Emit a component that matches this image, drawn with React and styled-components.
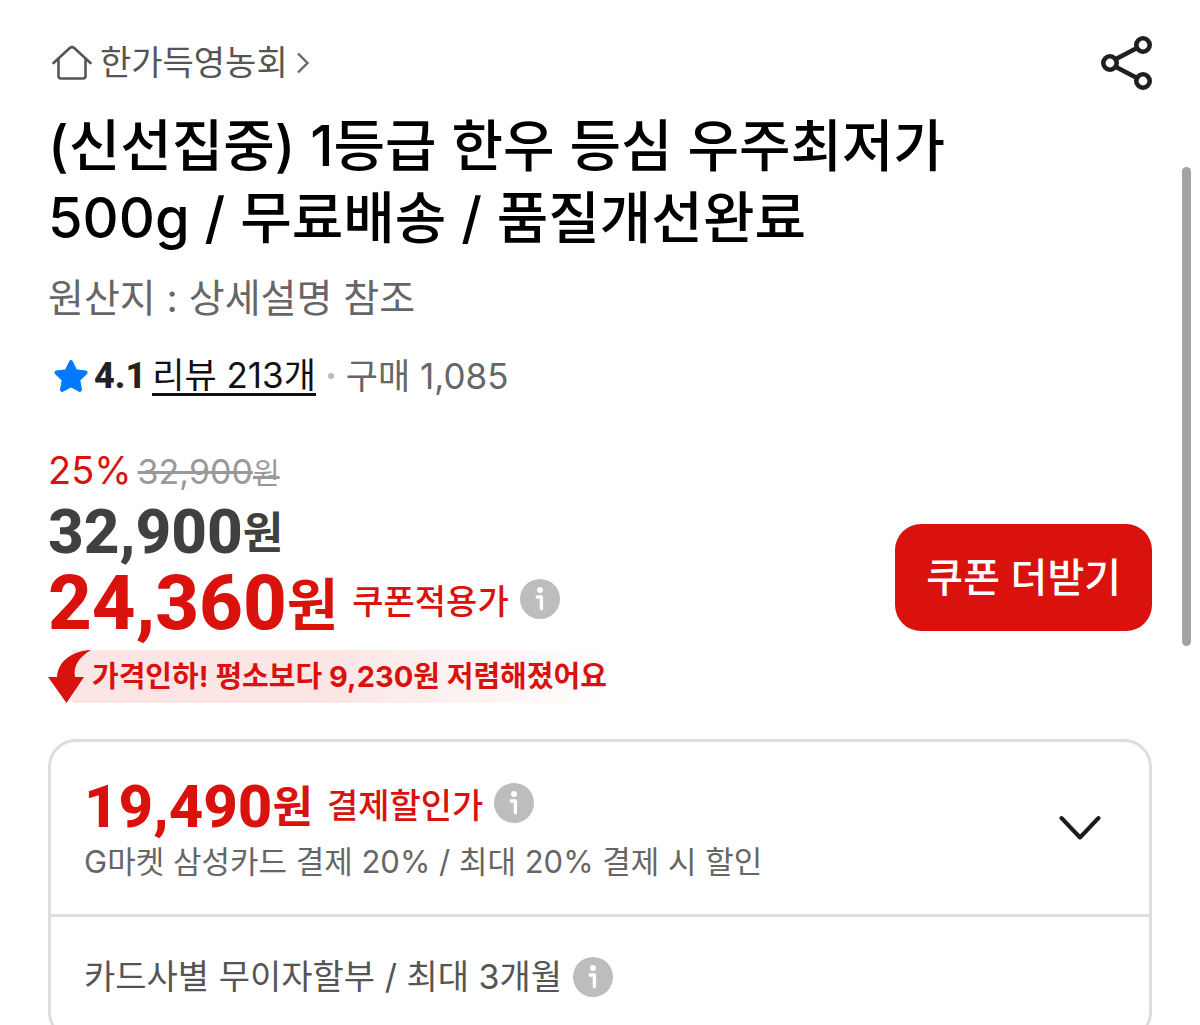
import React, { useState } from "react";
import styled, { createGlobalStyle } from "styled-components";

const InfoIcon = () => (
  <svg width="40" height="40" viewBox="0 0 40 40" aria-hidden="true">
    <circle cx="20" cy="20" r="20" fill="#bdbdbd" />
    <circle cx="20" cy="11" r="2.9" fill="#fff" />
    <path
      d="M17.2 18H21.4V29.8"
      fill="none"
      stroke="#fff"
      strokeWidth="3.4"
      strokeLinecap="round"
      strokeLinejoin="round"
    />
  </svg>
);

const App = () => {
  const [open, setOpen] = useState(true);

  return (
    <>
      <GlobalStyle />
      <Page>
        <Header>
          <StoreLink href="#store">
            <svg width="40" height="36" viewBox="0 0 40 36" fill="none">
              <path
                d="M1.5 18L17.5 3.2Q20 1.2 22.5 3.2L38.5 18M6.5 14V31Q6.5 33.5 9 33.5H31Q33.5 33.5 33.5 31V14"
                stroke="#555"
                strokeWidth="2.6"
                strokeLinecap="round"
                strokeLinejoin="round"
              />
            </svg>
            <span>한가득영농회</span>
            <svg width="14" height="22" viewBox="0 0 14 22" fill="none">
              <path d="M2 1.5L11.5 11L2 20.5" stroke="#666" strokeWidth="2.4" />
            </svg>
          </StoreLink>
          <IconButton type="button" aria-label="공유">
            <svg width="52" height="56" viewBox="0 0 52 56" fill="none">
              <g stroke="#1f1f1f" strokeWidth="4.6">
                <path d="M16 24L37 13M16 32L37 43" />
                <circle cx="10" cy="28" r="6.7" />
                <circle cx="43" cy="10" r="6.7" />
                <circle cx="43" cy="46" r="6.7" />
              </g>
            </svg>
          </IconButton>
        </Header>

        <Title>
          (신선집중) 1등급 한우 등심 우주최저가 500g / 무료배송 / 품질개선완료
        </Title>
        <Origin>원산지 : 상세설명 참조</Origin>

        <Rating>
          <svg width="36" height="34" viewBox="0 0 36 34">
            <path
              d="M18 3L22.4 12.2L32.6 13.6L25.2 20.7L27 30.9L18 26.2L9 30.9L10.8 20.7L3.4 13.6L13.6 12.2Z"
              fill="#007aff"
              stroke="#007aff"
              strokeWidth="4"
              strokeLinejoin="round"
            />
          </svg>
          <Score>4.1</Score>
          <ReviewLink href="#reviews">리뷰 213개</ReviewLink>
          <Dot />
          <Bought>구매 1,085</Bought>
        </Rating>

        <PriceArea>
          <Prices>
            <DiscountRow>
              <Percent>25%</Percent>
              <OldPrice>
                32,900<small>원</small>
              </OldPrice>
            </DiscountRow>
            <PriceRow>
              <Price>
                32,900<Won>원</Won>
              </Price>
            </PriceRow>
            <PriceRow $large>
              <Price $red $large>
                24,360<Won $large>원</Won>
              </Price>
              <PriceLabel>쿠폰적용가</PriceLabel>
              <IconButton type="button" aria-label="쿠폰적용가 안내">
                <InfoIcon />
              </IconButton>
            </PriceRow>
          </Prices>
          <CouponButton type="button">쿠폰 더받기</CouponButton>
        </PriceArea>

        <DropBanner>
          <svg width="44" height="53" viewBox="0 0 44 53">
            <path
              d="M43 0C24 1 10 11 9 27H0L18.5 53L36 27H27C25 16 31 7 43 0Z"
              fill="#d9120d"
            />
          </svg>
          <DropText>가격인하! 평소보다 9,230원 저렴해졌어요</DropText>
        </DropBanner>

        <Card>
          <CardMain>
            <div>
              <PriceRow>
                <Price $red $compact>
                  19,490<Won>원</Won>
                </Price>
                <PriceLabel>결제할인가</PriceLabel>
                <IconButton type="button" aria-label="결제할인가 안내">
                  <InfoIcon />
                </IconButton>
              </PriceRow>
              <CardNote>G마켓 삼성카드 결제 20% / 최대 20% 결제 시 할인</CardNote>
            </div>
            <IconButton
              type="button"
              aria-label="카드 혜택"
              aria-expanded={open}
              onClick={() => setOpen(!open)}
            >
              <svg width="42" height="26" viewBox="0 0 42 26" fill="none">
                <path
                  d="M2.5 3L21 22.5L39.5 3"
                  stroke="#1c1c1c"
                  strokeWidth="4"
                  strokeLinecap="round"
                  strokeLinejoin="round"
                />
              </svg>
            </IconButton>
          </CardMain>
          {open && (
            <Installment>
              <span>카드사별 무이자할부 / 최대 3개월</span>
              <IconButton type="button" aria-label="무이자할부 안내">
                <InfoIcon />
              </IconButton>
            </Installment>
          )}
        </Card>
      </Page>
      <ScrollThumb />
    </>
  );
};

export default App;

const GlobalStyle = createGlobalStyle`
  * {
    box-sizing: border-box;
  }

  body {
    margin: 0;
    background: #fff;
    color: #000;
    font-family: Inter, "Noto Sans CJK KR", sans-serif;
  }

  svg {
    display: block;
    flex-shrink: 0;
  }
`;

const Page = styled.main`
  height: 100vh;
  padding: 28px 48px 40px;
  overflow-y: auto;
  scrollbar-width: none;
`;

const ScrollThumb = styled.div`
  position: fixed;
  top: 167px;
  right: 9px;
  width: 9px;
  height: 479px;
  border-radius: 5px;
  background: #a3a3a3;
`;

const Header = styled.header`
  display: flex;
  align-items: center;
  justify-content: space-between;
  height: 70px;
`;

const StoreLink = styled.a`
  display: flex;
  align-items: center;
  gap: 8px;
  padding-left: 4px;
  color: #555;
  font-size: 34px;
  line-height: 48px;
  text-decoration: none;
`;

const IconButton = styled.button`
  flex-shrink: 0;
  padding: 0;
  border: 0;
  background: none;
  cursor: pointer;
`;

const Title = styled.h1`
  max-width: 960px;
  margin: 12px 0 0;
  font-size: 56px;
  font-weight: 500;
  line-height: 72px;
  word-break: keep-all;
`;

const Origin = styled.p`
  margin: 18px 0 0;
  color: #666;
  font-size: 39px;
  line-height: 52px;
`;

const Rating = styled.div`
  display: flex;
  align-items: center;
  margin-top: 28px;
  padding-left: 5px;
  font-size: 35px;
  line-height: 48px;
`;

const Score = styled.strong`
  margin: 0 6px 0 5px;
  color: #222;
  font-family: Roboto, sans-serif;
  font-size: 36px;
  font-weight: 800;
`;

const ReviewLink = styled.a`
  border-bottom: 3px solid #111;
  color: #111;
  line-height: 36px;
  text-decoration: none;
`;

const Dot = styled.span`
  width: 6px;
  height: 6px;
  margin: 0 12px;
  border-radius: 50%;
  background: #bbb;
`;

const Bought = styled.span`
  color: #666;
`;

const PriceArea = styled.section`
  display: flex;
  align-items: flex-end;
  justify-content: space-between;
  margin-top: 46px;
`;

const Prices = styled.div`
  display: flex;
  flex-direction: column;
`;

const DiscountRow = styled.div`
  display: flex;
  align-items: baseline;
  gap: 6px;
  height: 50px;
  line-height: 48px;
`;

const Percent = styled.span`
  color: #d9120d;
  font-size: 38px;
`;

const OldPrice = styled.del`
  color: #999;
  font-size: 34px;

  small {
    font-size: 29px;
  }
`;

const PriceRow = styled.div`
  display: flex;
  align-items: center;
  height: ${(props) => (props.$large ? "78px" : "64px")};
`;

const priceSize = (props) => {
  if (props.$large) return "76px";
  return props.$compact ? "60px" : "62px";
};

const Price = styled.strong`
  padding-top: 8px;
  color: ${(props) => (props.$red ? "#d9120d" : "#404040")};
  font-family: Roboto, "Noto Sans CJK KR", sans-serif;
  font-size: ${priceSize};
  font-weight: 800;
  line-height: 64px;
`;

const Won = styled.span`
  font-size: ${(props) => (props.$large ? "56px" : "44px")};
  font-weight: 700;
  line-height: 48px;
  vertical-align: 4px;
`;

const PriceLabel = styled.span`
  margin: 0 11px 0 14px;
  padding-top: 6px;
  color: #d9120d;
  font-size: 34px;
  font-weight: 500;
  line-height: 48px;
`;

const CouponButton = styled.button`
  margin-bottom: 7px;
  padding: 24px 31px;
  border: 0;
  border-radius: 26px;
  background: #d9120d;
  color: #fff;
  font-family: inherit;
  font-size: 40px;
  font-weight: 500;
  line-height: 59px;
  cursor: pointer;
`;

const DropBanner = styled.div`
  display: flex;
  align-items: center;
  width: fit-content;
  margin-top: 12px;
  background: linear-gradient(90deg, #fff 24px, #fbe5e5 25px, #fbe5e5 50%, #fff);
`;

const DropText = styled.span`
  color: #d9120d;
  font-size: 29px;
  font-weight: 700;
  line-height: 53px;
`;

const Card = styled.section`
  margin-top: 36px;
  border: 3px solid #ddd;
  border-radius: 28px;
`;

const CardMain = styled.div`
  display: flex;
  align-items: center;
  justify-content: space-between;
  padding: 29px 48px 29px 33px;
`;

const CardNote = styled.p`
  margin: 4px 0 0;
  color: #666;
  font-size: 31px;
  line-height: 46px;
`;

const Installment = styled.div`
  display: flex;
  align-items: center;
  gap: 11px;
  padding: 36px 33px;
  border-top: 3px solid #ddd;
  color: #555;
  font-size: 34px;
  line-height: 48px;
`;
